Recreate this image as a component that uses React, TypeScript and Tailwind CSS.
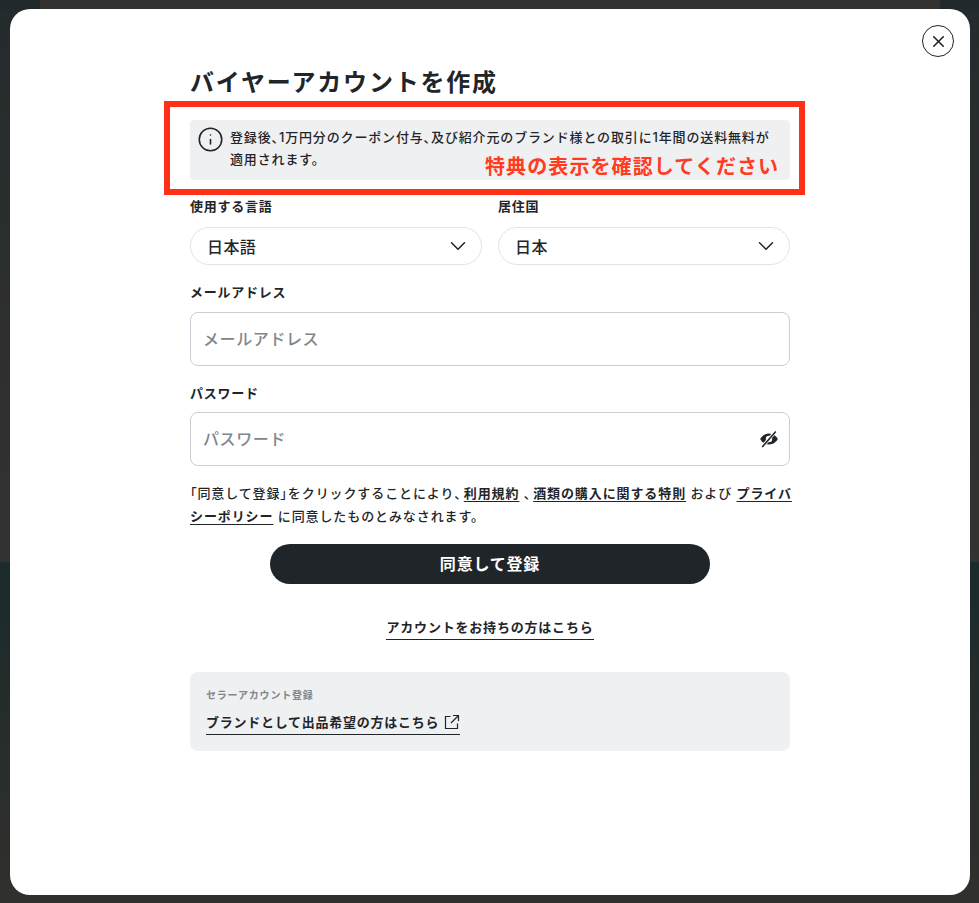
import { ChevronDown, Info, X } from "lucide-react"

const font = "font-['Inter','Noto_Sans_CJK_JP',sans-serif]"

// punctuation is set narrow in the reference, kana stay full width
function P({ children }: { children: React.ReactNode }) {
  return <span className="[font-feature-settings:'palt']">{children}</span>
}

function Select({ label, value }: { label: string; value: string }) {
  return (
    <div className="flex-1">
      <div className="text-[13px] leading-[20px] font-bold tracking-[0.75px] text-[#1f2528]">{label}</div>
      <div className="mt-[11px] flex h-[38px] items-center justify-between rounded-[19px] border border-[#e3e4e6] pl-[16px] pr-[10px] text-[16px] font-medium tracking-[0.4px] text-[#1f2528]">
        <span className="pt-[2px]">{value}</span>
        <ChevronDown className="h-[26px] w-[26px]" strokeWidth={1.4} />
      </div>
    </div>
  )
}

function Field({ label, placeholder, gap, children }: { label: string; placeholder: string; gap: string; children?: React.ReactNode }) {
  return (
    <div>
      <div className="text-[13px] leading-[20px] font-bold tracking-[0.75px] text-[#1f2528]">{label}</div>
      <div className={`${gap} flex h-[54px] items-center justify-between rounded-[8px] border border-[#c9ced6] pl-[12px] pr-[10px] text-[16px] font-medium tracking-[0.6px] text-[#7f868c]`}>
        <span>{placeholder}</span>
        {children}
      </div>
    </div>
  )
}

// slashed solid eye, the lucide one is too thin for this
function EyeSlash() {
  return (
    <svg viewBox="0 0 20 20" className="h-[20px] w-[20px] text-[#1f2528]" fill="currentColor">
      <path d="M10 4.5c4.4 0 7.6 3 8.8 5.5-1.2 2.5-4.4 5.5-8.8 5.5S2.4 12.5 1.2 10C2.4 7.5 5.6 4.5 10 4.5Zm0 2.3A3.2 3.2 0 1 0 10 13.2 3.2 3.2 0 0 0 10 6.8Z" />
      <path d="M16.5 2.5 3.5 17.5" stroke="white" strokeWidth="3.4" />
      <path d="M16.8 2.5 3.2 18" stroke="currentColor" strokeWidth="1.6" />
    </svg>
  )
}

function Ext() {
  return (
    <svg viewBox="0 0 16 16" className="h-[16px] w-[16px]" fill="none" stroke="currentColor" strokeWidth="1.2">
      <path d="M6.5 2.5H1.500V14.500H13.500V9.500" />
      <path d="M7 9 14.500 1.500M9 1.500H14.500V7" />
    </svg>
  )
}

const lnk = "font-bold underline underline-offset-[3px]"

export default function App() {
  return (
    <div className={`relative h-[903px] w-[979px] overflow-hidden bg-[#333231] ${font}`}>
      {/* page behind the overlay */}
      <div className="flex h-full flex-col">
        <div className="flex h-[9px]">
          <div className="w-[40px] bg-[#20282b]" />
          <div className="flex-1 bg-[#333231]" />
          <div className="w-[39px] bg-[#20282b]" />
        </div>
        <div className="h-[553px] bg-gradient-to-b from-[#252b2d] to-[#333231]" />
        <div className="h-[341px] bg-gradient-to-b from-[#1b2a2b] to-[#31302c]" />
      </div>

      {/* modal */}
      <div className="absolute left-[10px] top-[9px] h-[886px] w-[960px] rounded-[20px] bg-white">
        <button className="absolute right-[16px] top-[16px] flex h-[32px] w-[32px] items-center justify-center rounded-full border border-[#1f2528] text-[#1f2528]">
          <X className="h-[19px] w-[19px]" strokeWidth={2} />
        </button>

        <div className="mx-auto w-[600px] pt-[56px]">
          <h1 className="text-[24px] leading-[36px] font-bold tracking-[1.8px] text-[#1f2528]">バイヤーアカウントを作成</h1>

          <div className="mt-[19px] flex h-[60px] gap-[6px] rounded-[4px] bg-[#eff0f2] pl-[7px] pr-[18px] pt-[6px]">
            <Info className="h-[27px] w-[27px] shrink-0 text-[#1f2528]" strokeWidth={1.4} />
            <p className="text-[13px] leading-[22px] font-medium tracking-[0.85px] text-[#1f2528]">
              登録後<P>、</P>1万円分のクーポン付与<P>、</P>及び紹介元のブランド様との取引に1年間の送料無料が適用されます。
            </p>
          </div>

          <div className="mt-[16px] flex gap-[16px]">
            <Select label="使用する言語" value="日本語" />
            <Select label="居住国" value="日本" />
          </div>

          <div className="mt-[17px]">
            <Field label="メールアドレス" placeholder="メールアドレス" gap="mt-[10px]" />
          </div>
          <div className="mt-[17px]">
            <Field label="パスワード" placeholder="パスワード" gap="mt-[9px]">
              <EyeSlash />
            </Field>
          </div>

          <p className="-mr-[4px] mt-[16px] text-[13px] leading-[23px] font-medium tracking-[0.9px] text-[#1f2528]">
            <P>「</P>同意して登録<P>」</P>をクリックすることにより<P>、</P><a className={`${lnk} ml-[2px]`}>利用規約</a> <P>、</P><a className={`${lnk} ml-[2px]`}>酒類の購入に関する特則</a> および <a className={lnk}>プライバシーポリシー</a> に同意したものとみなされます。
          </p>

          <button className="mx-auto mt-[16px] flex h-[40px] w-[440px] items-center justify-center rounded-[20px] bg-[#1f2528] text-[16px] font-bold tracking-[0.8px] text-white">
            同意して登録
          </button>

          <div className="mt-[33px] flex justify-center">
            <a className="border-b border-[#1f2528] pb-[2px] text-[13px] leading-[20px] font-bold tracking-[0.8px] text-[#1f2528]">アカウントをお持ちの方はこちら</a>
          </div>

          <div className="mt-[32px] h-[79px] rounded-[8px] bg-[#eff0f2] pl-[16px] pt-[14px]">
            <div className="text-[10px] leading-[18px] font-bold tracking-[0.8px] text-[#7f868c]">セラーアカウント登録</div>
            <a className="mt-[8px] inline-flex items-center gap-[5px] border-b border-[#1f2528] pb-[2px] text-[13px] leading-[20px] font-bold tracking-[0.75px] text-[#1f2528]">
              ブランドとして出品希望の方はこちら
              <Ext />
            </a>
          </div>
        </div>
      </div>

      {/* red annotation over the screenshot */}
      <div className="absolute left-[164px] top-[101px] h-[94px] w-[641px] border-[6px] border-[#ff3018]" />
      <div className="absolute left-[485px] top-[153px] text-[20px] leading-[28px] font-bold tracking-[1.1px] text-[#ff3b22]">特典の表示を確認してください</div>
    </div>
  )
}
